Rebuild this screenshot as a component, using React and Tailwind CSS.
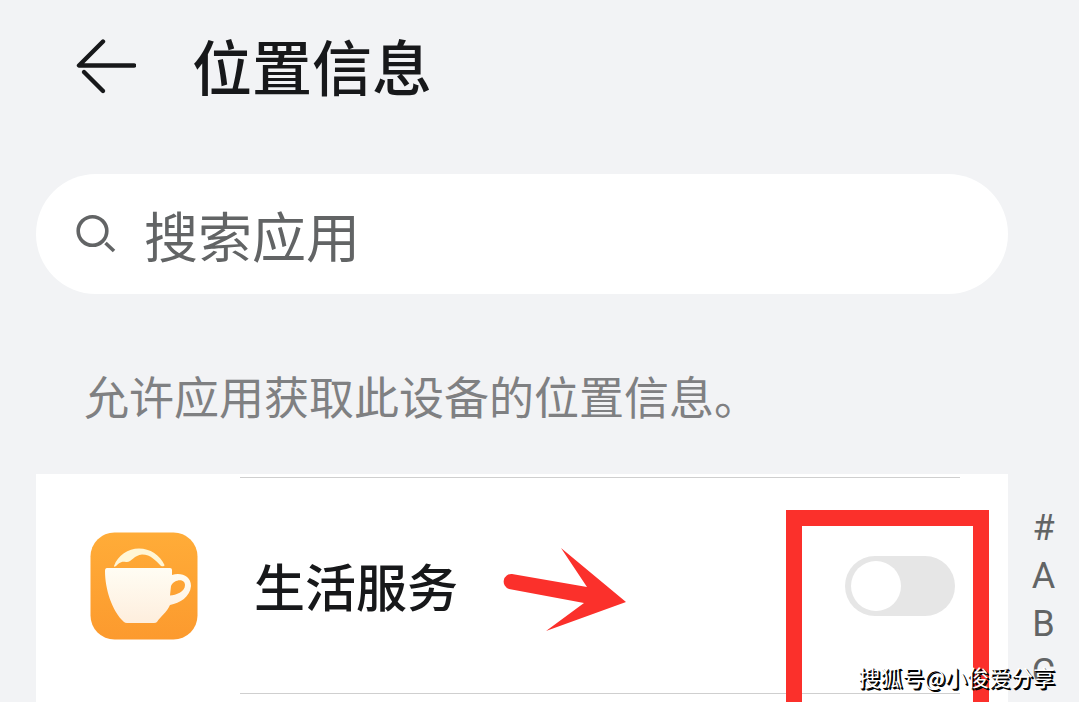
import { useState } from "react";

const letters = ["#", "A", "B", "C"];

function BackIcon() {
  return (
    <svg viewBox="0 0 60 56" className="h-14 w-[60px]" fill="none" stroke="#17181a" strokeWidth="4.400" strokeLinecap="round" aria-hidden="true">
      <path d="M27 2.500 3 26.500H58" strokeLinejoin="round" />
      <path d="M8 33 27 52" />
    </svg>
  );
}

function SearchIcon() {
  return (
    <svg viewBox="0 0 40 40" className="size-10 shrink-0" fill="none" stroke="#626465" strokeWidth="3.600" aria-hidden="true">
      <circle cx="16.500" cy="17" r="14.300" />
      <path d="m29.500 29 8.500 8" />
    </svg>
  );
}

function CupIcon() {
  return (
    <svg viewBox="0 0 108 108" className="size-[108px] shrink-0" aria-hidden="true">
      <defs>
        <linearGradient id="tile" x1="0" y1="0" x2="0" y2="1">
          <stop offset="0" stopColor="#ffac38" />
          <stop offset="1" stopColor="#fc9a2e" />
        </linearGradient>
        <linearGradient id="cup" x1="0" y1="0" x2="0" y2="1">
          <stop offset="0" stopColor="#fffdf4" />
          <stop offset="1" stopColor="#feeedd" />
        </linearGradient>
      </defs>
      <rect x=".5" y=".5" width="107" height="107" rx="24" fill="url(#tile)" />
      <path d="M24 34C28 23 38 16.500 49 16.500C60 16.500 70 23 74.500 33Q74.500 35 71 34C66 29 61 22.500 52 22.500C44 23 41 31 36 30C31 28.500 28 32 26 34Q24 35.500 24 34Z" fill="#fff6d6" />
      <path fillRule="evenodd" fill="url(#cup)" d="M17 36H80Q82 36 82 38V43C91 40 101 44 101 54C100 65 90 71 80 73C77 80 70 85 67 90Q66 91 64 91H37Q35 91 34 90C22 79 15 57 15 39Q15 36 17 36ZM81 54C84 47 95 46 95 53C95 60 86 63 80 63.500Z" />
    </svg>
  );
}

function PointerArrow() {
  return (
    <svg viewBox="0 0 124 86" className="absolute top-[72px] left-[466px] h-[86px] w-[124px]" fill="#fb302b" aria-hidden="true">
      <path d="M10 28 85 41 59 2 124 56 44 85 82 57 7 43A7.700 7.700 0 0 1 10 28Z" />
    </svg>
  );
}

export default function App() {
  const [query, setQuery] = useState("");
  const [allowed, setAllowed] = useState(false);

  return (
    <div className="relative flex h-screen flex-col overflow-hidden bg-[#f2f3f5] font-['Noto_Sans_CJK_SC',sans-serif]">
      <header className="flex h-[134px] shrink-0 items-center gap-14 pl-[76px]">
        <button type="button" aria-label="返回">
          <BackIcon />
        </button>
        <h1 className="pb-1 text-[60px] leading-none font-medium text-[#17181a]">位置信息</h1>
      </header>

      <label className="mt-10 mr-[71px] ml-9 flex h-[120px] shrink-0 items-center gap-7 rounded-full bg-white px-10">
        <SearchIcon />
        <input
          type="text"
          aria-label="搜索应用"
          placeholder="搜索应用"
          value={query}
          onChange={(e) => setQuery(e.target.value)}
          className="h-20 min-w-0 flex-1 bg-transparent text-[54px] text-[#626465] outline-none placeholder:text-[#626465]"
        />
      </label>

      <p className="mt-[72px] shrink-0 pl-[84px] text-[45px] leading-[60px] whitespace-nowrap text-[#7f8082]">
        允许应用获取此设备的位置信息。
      </p>

      <div className="mt-12 flex min-h-0 flex-1">
        <ul className="relative ml-9 flex-1 bg-white pt-[3px]">
          <li className="relative flex h-[217px] items-center pr-[53px] pl-[54px] before:absolute before:top-0 before:right-12 before:left-[204px] before:h-px before:bg-[#cfcfcf] after:absolute after:right-12 after:bottom-0 after:left-[204px] after:h-px after:bg-[#cfcfcf]">
            <CupIcon />
            <span className="ml-14 flex-1 text-[51px] leading-none font-medium text-[#17181a]">生活服务</span>
            <span className="relative z-10 flex">
              <button
                type="button"
                role="switch"
                aria-checked={allowed}
                aria-label="生活服务"
                onClick={() => setAllowed(!allowed)}
                className={`flex h-[60px] w-[110px] items-center rounded-full bg-[#e6e6e6] px-1.5 ${allowed ? "justify-end" : "justify-start"}`}
              >
                <span className="size-[50px] rounded-full bg-white" />
              </button>
              <span className="pointer-events-none absolute -top-[46px] -left-[59px] h-60 w-[203px] border-16 border-[#fb302b]" />
            </span>
          </li>
          <li aria-hidden="true">
            <PointerArrow />
          </li>
        </ul>
        <nav aria-label="索引" className="flex w-[71px] flex-col items-center pt-[30px] font-[Roboto,sans-serif]">
          {letters.map((letter) => (
            <a key={letter} href={`#${letter}`} className="h-12 shrink-0 text-[36px] leading-12 text-[#626465]">
              {letter}
            </a>
          ))}
        </nav>
      </div>

      <span className="absolute right-6 bottom-2.5 z-20 text-[22px] leading-8 text-white [text-shadow:1px_1px_0_#000,2px_2px_0_#000]">
        搜狐号@小俊爱分享
      </span>
    </div>
  );
}
